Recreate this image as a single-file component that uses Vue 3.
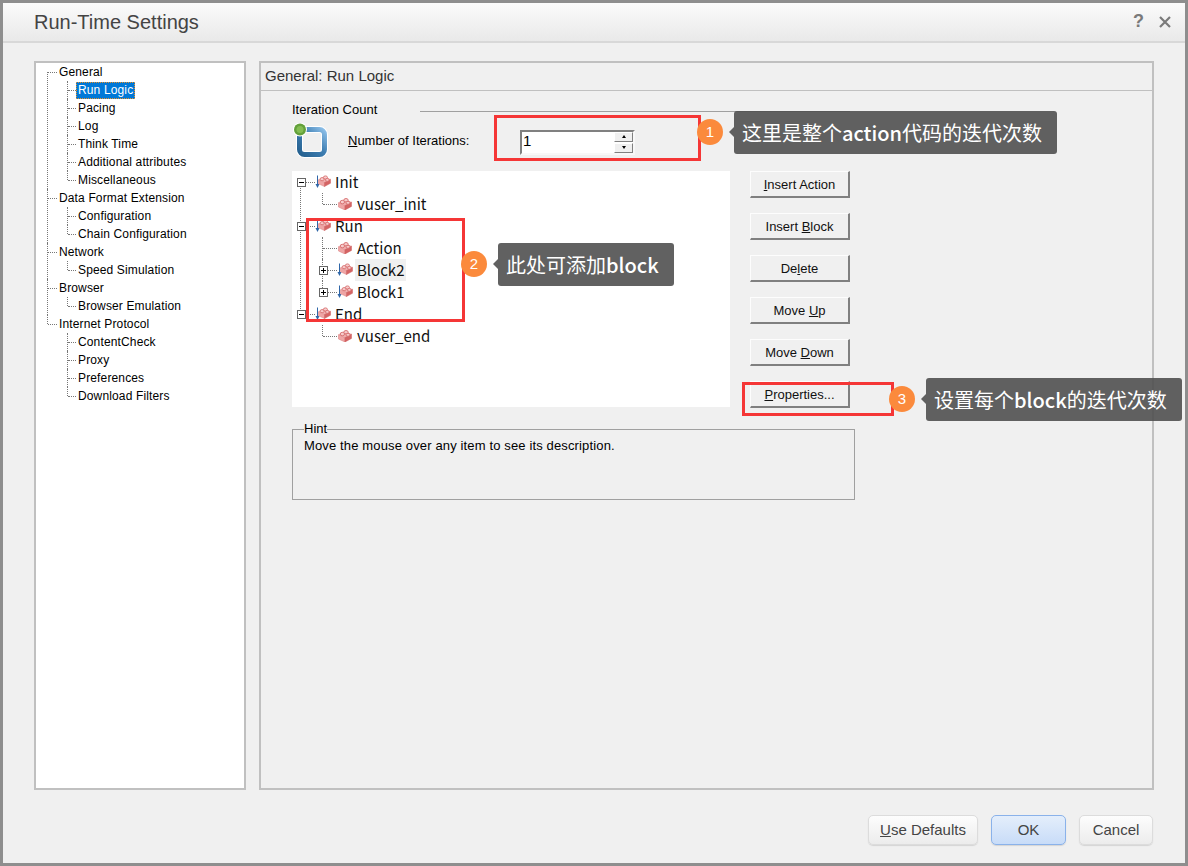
<template>
  <div class="window">
    <svg class="sprites" width="0" height="0">
      <symbol id="brick" viewBox="0 0 14 12">
        <path d="M0.5 4.6 L7 1 L13.5 4 L7 7.6 Z" fill="#f0b0b0" />
        <path d="M0.5 4.6 L7 7.6 V12 L0.5 9 Z" fill="#efa5a5" stroke="#d87a7a" stroke-width="0.5" />
        <path d="M7 7.6 L13.5 4 V8.4 L7 12 Z" fill="#d46464" stroke="#cc5f5f" stroke-width="0.5" />
        <ellipse cx="4.4" cy="4" rx="2.2" ry="1.7" fill="#f7cccc" stroke="#d66e6e" stroke-width="0.9" />
        <ellipse cx="8" cy="2.2" rx="2.2" ry="1.7" fill="#f7cccc" stroke="#d66e6e" stroke-width="0.9" />
        <ellipse cx="10" cy="4.8" rx="2" ry="1.5" fill="#f7cccc" stroke="#d66e6e" stroke-width="0.9" />
      </symbol>
    </svg>

    <header class="titlebar">
      <h1 class="title">Run-Time Settings</h1>
      <div class="title-btns">
        <span class="help">?</span>
        <svg class="close" width="14" height="14" viewBox="0 0 14 14">
          <path d="M2 2 L12 12 M12 2 L2 12" stroke="#7a7a7a" stroke-width="2.2" fill="none" />
        </svg>
      </div>
    </header>

    <main class="main">
      <!-- left nav tree -->
      <nav class="nav-panel">
        <ul class="nav-tree">
          <li v-for="group in navTree" :key="group.label" class="nav-root">
            <div class="nav-row"><span class="nav-label">{{ group.label }}</span></div>
            <ul class="nav-kids">
              <li v-for="kid in group.kids" :key="kid" class="nav-kid">
                <div class="nav-row">
                  <span class="nav-label" :class="{ selected: kid === 'Run Logic' }">{{ kid }}</span>
                </div>
              </li>
            </ul>
          </li>
        </ul>
      </nav>

      <section class="content-panel">
        <div class="content-head">General: Run Logic</div>
        <div class="content-body">
          <div class="legend-row">
            <span class="legend-text">Iteration Count</span>
            <span class="legend-line"></span>
          </div>
          <div class="iter-row">
            <svg class="iter-icon" width="36" height="36" viewBox="0 0 36 36">
              <defs>
                <linearGradient id="ring" x1="0" y1="1" x2="1" y2="0">
                  <stop offset="0" stop-color="#24608f" />
                  <stop offset="0.55" stop-color="#3f7fb3" />
                  <stop offset="1" stop-color="#8dbfe8" />
                </linearGradient>
              </defs>
              <rect x="7.5" y="6.5" width="25" height="25" rx="5" fill="none" stroke="#fff" stroke-width="7" />
              <rect x="7.5" y="6.5" width="25" height="25" rx="5" fill="none" stroke="url(#ring)" stroke-width="5" />
              <circle cx="8" cy="6.5" r="7" fill="#fff" />
              <circle cx="8" cy="6.5" r="6" fill="#63a03a" />
              <circle cx="8" cy="6.5" r="3.5" fill="#83bd52" />
            </svg>
            <label class="iter-label"><u>N</u>umber of Iterations:</label>
            <div class="spinner">
              <span class="spin-value">1</span>
              <div class="spin-btns">
                <span class="spin-btn"><i class="tri up"></i></span>
                <span class="spin-btn"><i class="tri down"></i></span>
              </div>
            </div>
          </div>

          <div class="action-row">
            <ul class="run-tree">
              <li v-for="root in runTree" :key="root.label" class="run-root">
                <div class="run-row">
                  <span class="expander minus"></span>
                  <svg class="tree-icon" width="18" height="14" viewBox="0 0 18 14">
                    <path d="M1.5 0.5 V10" stroke="#2f66a8" stroke-width="1" fill="none" />
                    <path d="M-0.5 9 L1.5 13 L3.5 9 Z" fill="#2f66a8" />
                    <use href="#brick" x="2" y="0" width="13" height="12" />
                  </svg>
                  <span class="run-label">{{ root.label }}</span>
                </div>
                <ul class="run-kids">
                  <li v-for="kid in root.kids" :key="kid.label" class="run-kid">
                    <div class="run-row">
                      <template v-if="kid.block">
                        <span class="expander"></span>
                        <svg class="tree-icon" width="19" height="14" viewBox="0 0 19 14">
                          <path d="M1.5 0.5 V10" stroke="#2f66a8" stroke-width="1" fill="none" />
                          <path d="M-0.5 9 L1.5 13 L3.5 9 Z" fill="#2f66a8" />
                          <use href="#brick" x="2" y="0" width="13" height="12" />
                        </svg>
                      </template>
                      <svg v-else class="tree-icon" width="19" height="14" viewBox="0 0 19 14">
                        <use href="#brick" x="0" y="1" width="14" height="12" />
                      </svg>
                      <span class="run-label" :class="{ hover: kid.label === 'Block2' }">{{ kid.label }}</span>
                    </div>
                  </li>
                </ul>
              </li>
            </ul>

            <div class="side-btns">
              <button class="win-btn"><u>I</u>nsert Action</button>
              <button class="win-btn">Insert <u>B</u>lock</button>
              <button class="win-btn">De<u>l</u>ete</button>
              <button class="win-btn">Move <u>U</u>p</button>
              <button class="win-btn">Move <u>D</u>own</button>
              <button class="win-btn"><u>P</u>roperties...</button>
            </div>
          </div>

          <fieldset class="hint">
            <legend>Hint</legend>
            Move the mouse over any item to see its description.
          </fieldset>
        </div>
      </section>
    </main>

    <footer class="footer">
      <button class="dlg-btn defaults"><u>U</u>se Defaults</button>
      <button class="dlg-btn ok">OK</button>
      <button class="dlg-btn cancel">Cancel</button>
    </footer>

    <!-- screenshot annotations, they sit on top of the dialog -->
    <div class="notes">
      <div class="red-box box-1"></div>
      <div class="red-box box-2"></div>
      <div class="red-box box-3"></div>
      <span class="badge badge-1">1</span>
      <span class="badge badge-2">2</span>
      <span class="badge badge-3">3</span>
      <div class="callout call-1"><span>这里是整个<b>action</b>代码的迭代次数</span></div>
      <div class="callout call-2"><span>此处可添加<b>block</b></span></div>
      <div class="callout call-3"><span>设置每个<b>block</b>的迭代次数</span></div>
    </div>
  </div>
</template>

<script setup>
const navTree = [
  { label: 'General', kids: ['Run Logic', 'Pacing', 'Log', 'Think Time', 'Additional attributes', 'Miscellaneous'] },
  { label: 'Data Format Extension', kids: ['Configuration', 'Chain Configuration'] },
  { label: 'Network', kids: ['Speed Simulation'] },
  { label: 'Browser', kids: ['Browser Emulation'] },
  { label: 'Internet Protocol', kids: ['ContentCheck', 'Proxy', 'Preferences', 'Download Filters'] }
]

const runTree = [
  { label: 'Init', kids: [{ label: 'vuser_init' }] },
  {
    label: 'Run',
    kids: [
      { label: 'Action' },
      { label: 'Block2', block: true },
      { label: 'Block1', block: true }
    ]
  },
  { label: 'End', kids: [{ label: 'vuser_end' }] }
]
</script>

<style>
html, body {
  margin: 0;
  background: #f0f0f0;
}
</style>

<style scoped>
* {
  box-sizing: border-box;
}
ul {
  list-style: none;
  margin: 0;
  padding: 0;
}
.sprites {
  position: absolute;
}
.window {
  position: relative;
  width: 1188px;
  height: 866px;
  border: 3px solid #8e8e8e;
  background: #f0f0f0;
  display: flex;
  flex-direction: column;
  font-family: "Liberation Sans", Arial, sans-serif;
  font-size: 13px;
  color: #000;
  overflow: hidden;
}
.titlebar {
  height: 40px;
  flex: none;
  display: flex;
  align-items: center;
  justify-content: space-between;
  padding: 1px 13px 0 31px;
  background: linear-gradient(#fbfbfb, #e9e9e9);
  border-bottom: 2px solid #d8d8d8;
}
.title {
  margin: 0;
  font-size: 20px;
  font-weight: 400;
  color: #444;
}
.title-btns {
  display: flex;
  align-items: center;
  gap: 14px;
  margin-top: -2px;
}
.help {
  font-size: 18px;
  font-weight: 700;
  color: #7a7a7a;
}
.main {
  flex: 1;
  min-height: 0;
  display: flex;
  gap: 13px;
  padding: 18px 31px 0;
}
.nav-panel {
  width: 212px;
  background: #fff;
  border: 2px solid #c0c0c0;
  font-size: 12px;
  letter-spacing: 0.14px;
}
.nav-root,
.nav-kid {
  position: relative;
}
.nav-root::before {
  content: "";
  position: absolute;
  left: 11px;
  top: 0;
  bottom: 0;
  border-left: 1px dotted #777;
}
.nav-root:first-child::before {
  top: 9px;
}
.nav-root:last-child::before {
  bottom: auto;
  height: 9px;
}
.nav-kid::before {
  content: "";
  position: absolute;
  left: 31px;
  top: 0;
  bottom: 0;
  border-left: 1px dotted #777;
}
.nav-kid:last-child::before {
  bottom: auto;
  height: 9px;
}
.nav-root > .nav-row::after,
.nav-kid > .nav-row::after {
  content: "";
  position: absolute;
  top: 9px;
  border-top: 1px dotted #777;
}
.nav-root > .nav-row::after {
  left: 12px;
  width: 9px;
}
.nav-kid > .nav-row::after {
  left: 32px;
  width: 8px;
}
.nav-row {
  position: relative;
  height: 18px;
  display: flex;
  align-items: center;
  padding-left: 21px;
}
.nav-kid > .nav-row {
  padding-left: 40px;
}
.nav-label {
  padding: 0 1px;
  border: 1px solid transparent;
  line-height: 15px;
  white-space: nowrap;
}
.nav-label.selected {
  background: #0078d7;
  color: #fff;
  border: 1px dotted #e8912a;
}
.content-panel {
  flex: 1;
  display: flex;
  flex-direction: column;
  border: 2px solid #c0c0c0;
}
.content-head {
  height: 28px;
  flex: none;
  display: flex;
  align-items: center;
  padding: 0 0 2px 4px;
  font-size: 15px;
  color: #333;
  border-bottom: 1px solid #c0c0c0;
}
.content-body {
  flex: 1;
  padding: 10px 0 0 31px;
}
.legend-row {
  width: 558px;
  height: 16px;
  display: flex;
  align-items: center;
}
.legend-text {
  width: 128px;
  flex: none;
}
.legend-line {
  flex: 1;
  height: 1px;
  margin-top: 4px;
  background: #a0a0a0;
}
.iter-row {
  height: 35px;
  margin: 6px 0 13px;
  display: flex;
  align-items: center;
}
.iter-icon {
  flex: none;
}
.iter-label {
  width: 172px;
  flex: none;
  margin-left: 20px;
}
.spinner {
  width: 115px;
  height: 25px;
  margin-top: 3px;
  display: flex;
  justify-content: space-between;
  background: #fff;
  border-top: 2px solid #808080;
  border-left: 2px solid #808080;
  border-right: 2px solid #f8f8f8;
  border-bottom: 2px solid #f8f8f8;
}
.spin-value {
  padding-left: 1px;
  font-size: 15px;
  line-height: 17px;
}
.spin-btns {
  width: 19px;
  display: flex;
  flex-direction: column;
  gap: 1px;
}
.spin-btn {
  flex: 1;
  display: flex;
  align-items: center;
  justify-content: center;
  background: #f0f0f0;
  border-top: 1px solid #fff;
  border-left: 1px solid #fff;
  border-right: 1px solid #808080;
  border-bottom: 1px solid #808080;
}
.tri {
  width: 0;
  height: 0;
  border-left: 2px solid transparent;
  border-right: 2px solid transparent;
}
.tri.up {
  border-bottom: 3px solid #000;
}
.tri.down {
  border-top: 3px solid #000;
}
.action-row {
  display: flex;
  gap: 20px;
}
.run-tree {
  width: 438px;
  height: 236px;
  flex: none;
  background: #fff;
  font-family: "Noto Sans CJK SC", "Noto Sans", sans-serif;
  font-size: 15px;
  color: #111;
}
.run-root,
.run-kid {
  position: relative;
}
.run-root:not(:last-child)::before {
  content: "";
  position: absolute;
  left: 8px;
  top: 14px;
  bottom: -8px;
  border-left: 1px dotted #777;
}
.run-kid::before {
  content: "";
  position: absolute;
  left: 30px;
  top: 0;
  bottom: 0;
  border-left: 1px dotted #777;
}
.run-kid:last-child::before {
  bottom: auto;
  height: 11px;
}
.run-row {
  position: relative;
  height: 22px;
  display: flex;
  align-items: center;
  padding-left: 24px;
}
.run-kid > .run-row {
  padding-left: 46px;
}
.run-row::before {
  content: "";
  position: absolute;
  top: 11px;
  left: 14px;
  width: 9px;
  border-top: 1px dotted #777;
}
.run-kid > .run-row::before {
  left: 31px;
  width: 14px;
}
.tree-icon {
  flex: none;
  overflow: visible;
}
.run-root > .run-row .tree-icon {
  margin-right: 1px;
}
.run-label {
  padding: 0 2px;
  margin-left: -2px;
  line-height: 22px;
}
.run-root > .run-row .run-label {
  margin-left: 0;
  padding-left: 0;
}
.run-label.hover {
  background: #f0f0f0;
}
.expander {
  position: absolute;
  z-index: 1;
  left: 5px;
  top: 7px;
  width: 9px;
  height: 9px;
  background: #fff;
  border: 1px solid #666;
}
.run-kid .expander {
  left: 27px;
}
.expander::before {
  content: "";
  position: absolute;
  left: 1px;
  top: 3px;
  width: 5px;
  height: 1px;
  background: #000;
}
.expander:not(.minus)::after {
  content: "";
  position: absolute;
  left: 3px;
  top: 1px;
  width: 1px;
  height: 5px;
  background: #000;
}
.side-btns {
  display: flex;
  flex-direction: column;
  gap: 15px;
}
.win-btn {
  width: 100px;
  height: 27px;
  padding: 1px 0 0;
  font: inherit;
  color: #111;
  background: #f0f0f0;
  border-style: solid;
  border-width: 1px 2px 2px 1px;
  border-color: #fdfdfd #808080 #808080 #fdfdfd;
}
.hint {
  width: 563px;
  height: 78px;
  margin: 14px 0 0;
  padding: 3px 11px 0;
  border: 1px solid #a0a0a0;
  line-height: 14px;
  letter-spacing: 0.14px;
}
.hint legend {
  margin-left: 0;
  padding: 0;
  line-height: 14px;
  letter-spacing: 0;
}
.footer {
  height: 73px;
  flex: none;
  display: flex;
  justify-content: flex-end;
  gap: 13px;
  padding: 25px 32px 0 0;
}
.dlg-btn {
  height: 30px;
  padding: 0 0 2px;
  font-family: inherit;
  font-size: 15px;
  color: #444;
  border: 1px solid #dcdcdc;
  border-radius: 5px;
  background: linear-gradient(#fdfdfd, #ececec);
  box-shadow: 0 1px 1px #d4d4d4;
}
.defaults {
  width: 110px;
}
.ok {
  width: 75px;
  border-color: #8ab2ea;
  background: linear-gradient(#e4eefb, #c8dcf8);
}
.cancel {
  width: 74px;
}
.notes {
  position: absolute;
  inset: -3px;
  pointer-events: none;
}
.red-box {
  position: absolute;
  border: 3px solid #f53636;
}
.box-1 {
  left: 494px;
  top: 115px;
  width: 207px;
  height: 46px;
}
.box-2 {
  left: 306px;
  top: 218px;
  width: 159px;
  height: 104px;
}
.box-3 {
  left: 742px;
  top: 382px;
  width: 152px;
  height: 34px;
}
.badge {
  position: absolute;
  width: 26px;
  height: 26px;
  border-radius: 50%;
  background: #fb8a3c;
  color: #fff;
  font-size: 15px;
  line-height: 26px;
  text-align: center;
}
.badge-1 {
  left: 697px;
  top: 119px;
}
.badge-2 {
  left: 461px;
  top: 251px;
}
.badge-3 {
  left: 889px;
  top: 386px;
}
.callout {
  position: absolute;
  height: 43px;
  display: flex;
  align-items: center;
  padding-left: 8px;
  border-radius: 3px;
  background: rgba(80, 80, 80, 0.9);
  color: #fff;
  font-family: "Noto Sans CJK SC", "Noto Sans", sans-serif;
  font-size: 20px;
  white-space: nowrap;
}
.callout b {
  font-weight: 500;
}
.callout::before {
  content: "";
  position: absolute;
  left: -5px;
  top: 16px;
  border-top: 5px solid transparent;
  border-bottom: 5px solid transparent;
  border-right: 5px solid rgba(80, 80, 80, 0.9);
}
.call-1 {
  left: 734px;
  top: 111px;
  width: 323px;
}
.call-2 {
  left: 498px;
  top: 243px;
  width: 176px;
}
.call-3 {
  left: 926px;
  top: 378px;
  width: 256px;
}
</style>
